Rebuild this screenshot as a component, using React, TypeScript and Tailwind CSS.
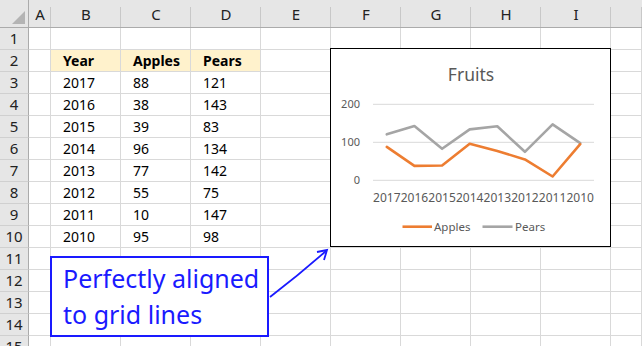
import React from "react";

const FONT = "'Noto Sans', 'Open Sans', sans-serif";

const cols = ["A", "B", "C", "D", "E", "F", "G", "H", "I", ""];
const colW = [22, 70, 70, 70, 70, 70, 70, 70, 70, 31];

const data: [string, string, string][] = [
  ["2017", "88", "121"],
  ["2016", "38", "143"],
  ["2015", "39", "83"],
  ["2014", "96", "134"],
  ["2013", "77", "142"],
  ["2012", "55", "75"],
  ["2011", "10", "147"],
  ["2010", "95", "98"],
];

function cellContent(r: number, c: number): { text: string; bold?: boolean; fill?: boolean } {
  if (r === 2 && c >= 1 && c <= 3) {
    return { text: ["Year", "Apples", "Pears"][c - 1], bold: true, fill: true };
  }
  if (r >= 3 && r <= 10 && c >= 1 && c <= 3) {
    return { text: data[r - 3][c - 1] };
  }
  return { text: "" };
}

function Chart() {
  const apples = [88, 38, 39, 96, 77, 55, 10, 95];
  const pears = [121, 143, 83, 134, 142, 75, 147, 98];
  const years = ["2017", "2016", "2015", "2014", "2013", "2012", "2011", "2010"];
  const x0 = 42;
  const step = 221 / 8;
  const y0 = 131.3;
  const k = 0.38;
  const px = (i: number) => x0 + step * (i + 0.5);
  const py = (v: number) => y0 - v * k;
  const pts = (arr: number[]) => arr.map((v, i) => `${px(i).toFixed(1)},${py(v).toFixed(1)}`).join(" ");
  return (
    <svg width="279" height="197" viewBox="0 0 279 197" className="block" style={{ fontFamily: FONT }}>
      <text x="140" y="32" textAnchor="middle" fontSize="17.5" fill="#595959">Fruits</text>
      {[0, 100, 200].map((v) => (
        <g key={v}>
          <line x1={x0} x2={263} y1={py(v)} y2={py(v)} stroke="#d9d9d9" strokeWidth="1" />
          <text x="29" y={py(v) + 4} textAnchor="end" fontSize="11" fill="#595959">{v}</text>
        </g>
      ))}
      {years.map((y, i) => (
        <text key={y} x={px(i)} y="152.5" textAnchor="middle" fontSize="12" fill="#595959">{y}</text>
      ))}
      <polyline points={pts(pears)} fill="none" stroke="#a5a5a5" strokeWidth="2.6" strokeLinejoin="round" strokeLinecap="round" />
      <polyline points={pts(apples)} fill="none" stroke="#ed7d31" strokeWidth="2.6" strokeLinejoin="round" strokeLinecap="round" />
      <line x1="71.5" x2="101" y1="177.7" y2="177.7" stroke="#ed7d31" strokeWidth="2.6" />
      <text x="103" y="182" fontSize="11.5" fill="#595959">Apples</text>
      <line x1="151.5" x2="181.5" y1="177.7" y2="177.7" stroke="#a5a5a5" strokeWidth="2.6" />
      <text x="184" y="182" fontSize="11.5" fill="#595959">Pears</text>
    </svg>
  );
}

export default function App() {
  const rows = Array.from({ length: 15 }, (_, i) => i + 1);
  return (
    <div
      className="relative w-[642px] h-[346px] overflow-hidden bg-white text-[14px] text-black"
      style={{ fontFamily: FONT }}
    >
      {/* column header */}
      <div className="flex h-[28px] bg-[#e6e6e6] border-b border-[#ababab]">
        <div className="relative w-[29px] shrink-0 border-r border-[#ababab]">
          <svg width="29" height="27" className="absolute left-0 top-0">
            <polygon points="12,24 25,24 25,11" fill="#b4b4b4" />
          </svg>
        </div>
        {cols.map((c, i) => (
          <div
            key={i}
            className="relative shrink-0 flex items-center justify-center text-[#222] text-[15px] pt-[1px]"
            style={{ width: colW[i] }}
          >
            {c}
            <span className="absolute right-0 top-[7px] bottom-0 w-px bg-[#c8c8c8]" />
          </div>
        ))}
      </div>
      {rows.map((r) => (
        <div key={r} className="flex h-[22px]">
          <div className="w-[29px] shrink-0 bg-[#e6e6e6] border-r border-[#ababab] border-b border-b-[#d0d0d0] flex items-center justify-center text-[#222] text-[15px]">
            {r}
          </div>
          {cols.map((_, c) => {
            const cell = cellContent(r, c);
            return (
              <div
                key={c}
                className={`shrink-0 flex items-center pl-[12px] border-r border-b border-[#d9d9d9] ${cell.fill ? "bg-[#fff2cc]" : ""} ${cell.bold ? "font-bold" : ""}`}
                style={{ width: colW[c] }}
              >
                {cell.text}
              </div>
            );
          })}
        </div>
      ))}

      {/* chart object */}
      <div className="absolute left-[330px] top-[48px] w-[281px] h-[199px] border border-black bg-white">
        <Chart />
      </div>

      {/* callout shape */}
      <div className="absolute left-[50px] top-[256px] w-[219px] h-[81px] border-2 border-[#1a1aff] bg-white pl-[11px] pt-[2px] text-[#1a1aff] text-[25px] leading-[36px] whitespace-nowrap">
        <div>Perfectly aligned</div>
        <div>to grid lines</div>
      </div>

      {/* arrow */}
      <svg className="absolute left-[260px] top-[240px]" width="80" height="70">
        <path d="M10,57 Q40,34 66,11" fill="none" stroke="#1a1aff" strokeWidth="1.8" />
        <path d="M57,12 L67,10 L64,20" fill="none" stroke="#1a1aff" strokeWidth="1.8" strokeLinejoin="miter" />
      </svg>
    </div>
  );
}
